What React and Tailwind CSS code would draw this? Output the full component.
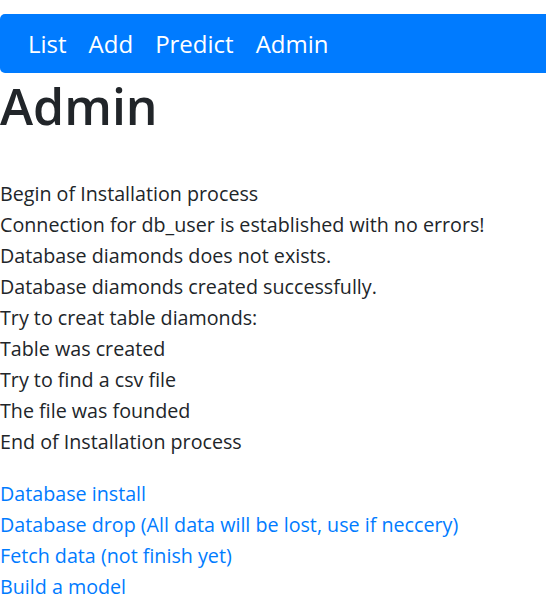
export default function App() {
  const log = [
    "Begin of Installation process",
    "Connection for db_user is established with no errors!",
    "Database diamonds does not exists.",
    "Database diamonds created successfully.",
    "Try to creat table diamonds:",
    "Table was created",
    "Try to find a csv file",
    "The file was founded",
    "End of Installation process",
  ];
  const links = [
    "Database install",
    "Database drop (All data will be lost, use if neccery)",
    "Fetch data (not finish yet)",
    "Build a model",
  ];

  return (
    <div
      className="min-h-screen bg-white text-[#212529] text-[19.7px] leading-[31px]"
      style={{ fontFamily: '"Open Sans", "Noto Sans", sans-serif' }}
    >
      <div className="pt-[14px]">
        <nav className="bg-[#007bff] rounded-l-[5px] h-[59px] flex items-center pl-[28px] gap-[22px] text-white text-[24px]">
          <a href="#">List</a>
          <a href="#">Add</a>
          <a href="#">Predict</a>
          <a href="#">Admin</a>
        </nav>
      </div>

      <h1 className="text-[50px] leading-[60px] font-semibold pt-[3px] mb-[42px]">Admin</h1>

      <div className="mb-[21px]">
        {log.map((line) => (
          <div key={line}>{line}</div>
        ))}
      </div>

      <div className="flex flex-col items-start">
        {links.map((l) => (
          <a key={l} href="#" className="text-[#007bff]">
            {l}
          </a>
        ))}
      </div>
    </div>
  );
}
